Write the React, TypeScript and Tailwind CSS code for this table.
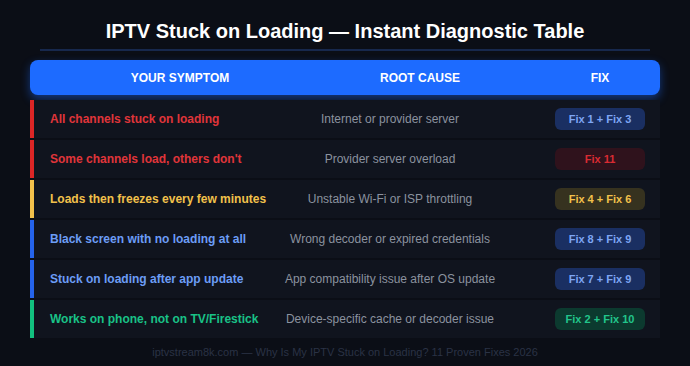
import React from 'react';

type Row = {
  symptom: string;
  cause: string;
  fix: string;
  tone: 'red' | 'yellow' | 'blue' | 'green';
};

const rows: Row[] = [
  { symptom: 'All channels stuck on loading', cause: 'Internet or provider server', fix: 'Fix 1 + Fix 3', tone: 'red' },
  { symptom: "Some channels load, others don't", cause: 'Provider server overload', fix: 'Fix 11', tone: 'red' },
  { symptom: 'Loads then freezes every few minutes', cause: 'Unstable Wi-Fi or ISP throttling', fix: 'Fix 4 + Fix 6', tone: 'yellow' },
  { symptom: 'Black screen with no loading at all', cause: 'Wrong decoder or expired credentials', fix: 'Fix 8 + Fix 9', tone: 'blue' },
  { symptom: 'Stuck on loading after app update', cause: 'App compatibility issue after OS update', fix: 'Fix 7 + Fix 9', tone: 'blue' },
  { symptom: 'Works on phone, not on TV/Firestick', cause: 'Device-specific cache or decoder issue', fix: 'Fix 2 + Fix 10', tone: 'green' },
];

const bar = {
  red: 'bg-[#dc2626]',
  yellow: 'bg-[#f2c14b]',
  blue: 'bg-[#2563eb]',
  green: 'bg-[#12c07f]',
};

const text = {
  red: 'text-[#e0353a]',
  yellow: 'text-[#f2c14b]',
  blue: 'text-[#6c9df6]',
  green: 'text-[#19c287]',
};

// Fix 11 badge is red, the first "Fix 1 + Fix 3" one stays blue
const badge = {
  red: 'bg-[#2f121c] text-[#d92b33]',
  yellow: 'bg-[#36321f] text-[#f2c14b]',
  blue: 'bg-[#1a2f62] text-[#7ea6f4]',
  green: 'bg-[#0c3a2f] text-[#22c58b]',
};

export default function App() {
  return (
    <div
      className="w-[690px] h-[366px] bg-[#0b0e16] overflow-hidden"
      style={{ fontFamily: '"Liberation Sans", Arial, sans-serif' }}
    >
      {/* Title */}
      <div className="pt-[18px] px-10">
        <h1 className="text-center text-white font-bold text-[20px] leading-[26px]">
          IPTV Stuck on Loading — Instant Diagnostic Table
        </h1>
        <div className="mt-[5px] h-[2px] bg-[#17284d]" />
      </div>

      {/* Table */}
      <div className="mx-[30px] mt-[9px]">
        <div className="flex items-center h-[35px] rounded-lg bg-[#1d6bff] shadow-[0_4px_10px_rgba(29,107,255,0.45)] text-white font-bold text-[12px]">
          <div className="w-[300px] text-center">YOUR SYMPTOM</div>
          <div className="w-[180px] text-center">ROOT CAUSE</div>
          <div className="w-[120px] ml-auto text-center">FIX</div>
        </div>

        <div className="mt-[5px] flex flex-col gap-[2px]">
          {rows.map((r, i) => (
            <div key={i} className="flex items-center h-[38px] bg-[#10141e]">
              <div className={`w-[4px] self-stretch ${bar[r.tone]}`} />
              <div className={`w-[236px] pl-4 font-bold text-[12px] whitespace-nowrap ${text[r.tone]}`}>
                {r.symptom}
              </div>
              <div className="w-[240px] text-center text-[12px] text-[#8b929e] whitespace-nowrap">
                {r.cause}
              </div>
              <div
                className={`ml-auto mr-[15px] w-[90px] h-[22px] rounded-md flex items-center justify-center font-bold text-[11px] ${
                  i === 0 ? badge.blue : badge[r.tone]
                }`}
              >
                {r.fix}
              </div>
            </div>
          ))}
        </div>
      </div>

      {/* Footer */}
      <div className="mt-[6px] text-center text-[11px] text-[#2a3245]">
        iptvstream8k.com — Why Is My IPTV Stuck on Loading? 11 Proven Fixes 2026
      </div>
    </div>
  );
}
